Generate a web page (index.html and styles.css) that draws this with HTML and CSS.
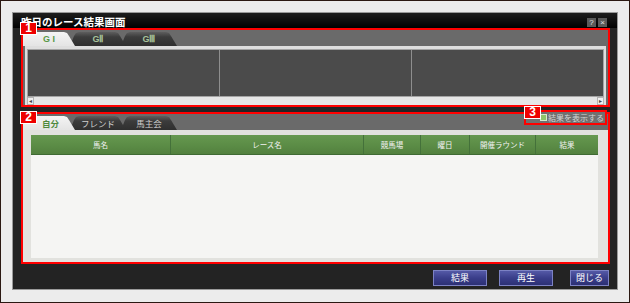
FILE: index.html
```html
<!DOCTYPE html>
<html>
  <head>
    <title>昨日のレース結果画面</title>
    <meta charset="utf-8" />
    <link rel="stylesheet" href="styles.css">
  </head>
  <body>
    <div class="window">
      <div class="titlebar">
        <span class="title">昨日のレース結果画面</span>
        <span class="tbtns"><span class="tbtn">?</span><span class="tbtn">×</span></span>
      </div>
      <div class="main">
        <!-- grade tabs -->
        <section class="box box-top">
          <span class="badge badge-1">1</span>
          <div class="tabs">
            <span class="tab tab-first active">G I</span>
            <span class="tab">GⅡ</span>
            <span class="tab">GⅢ</span>
          </div>
          <div class="panel">
            <div class="grid">
              <div class="col"></div>
              <div class="col"></div>
              <div class="col"></div>
            </div>
            <div class="hscroll">
              <span class="arrow">&#9666;</span>
              <span class="track"></span>
              <span class="arrow">&#9656;</span>
            </div>
          </div>
        </section>
        <!-- result list -->
        <section class="box box-bottom">
          <span class="badge badge-2">2</span>
          <div class="tabs">
            <span class="tab tab-first active ja">自分</span>
            <span class="tab ja">フレンド</span>
            <span class="tab ja">馬主会</span>
          </div>
          <label class="showres">
            <span class="badge badge-3">3</span>
            <span class="check"></span>結果を表示する
          </label>
          <div class="sheet">
            <div class="thead">
              <span>馬名</span>
              <span>レース名</span>
              <span>競馬場</span>
              <span>曜日</span>
              <span>開催ラウンド</span>
              <span>結果</span>
            </div>
            <div class="tbody"></div>
          </div>
        </section>
      </div>
      <div class="actions">
        <button class="btn btn-result">結果</button>
        <button class="btn btn-play">再生</button>
        <button class="btn btn-close">閉じる</button>
      </div>
    </div>
  </body>
</html>
```

FILE: styles.css
```css
* {
  box-sizing: border-box;
}
body {
  margin: 0;
  width: 630px;
  height: 303px;
  overflow: hidden;
  border: 1px solid #2b1812;
  background: #ececec;
  padding: 11px 0 0 11px;
  font-family: "Noto Sans CJK JP", "Liberation Sans", sans-serif;
}
.window {
  width: 606px;
  height: 278px;
  border: 1px solid #9a9a9a;
  background: #232323;
  display: flex;
  flex-direction: column;
}
/* title bar */
.titlebar {
  height: 15px;
  background: linear-gradient(#1e1e1e, #000);
  display: flex;
  align-items: center;
  justify-content: space-between;
  padding: 0 10px 0 8px;
}
.title {
  color: #fff;
  font-weight: bold;
  font-size: 10.5px;
  line-height: 15px;
  padding-top: 1px;
}
.tbtns {
  display: flex;
  gap: 2px;
  padding-top: 3px;
}
.tbtn {
  width: 9px;
  height: 9px;
  background: #5a5a5a;
  color: #e0e0e0;
  font-size: 8px;
  line-height: 9px;
  text-align: center;
  font-family: "Liberation Sans", sans-serif;
}
.main {
  padding: 0 7px 0 8px;
}
/* red outlined boxes */
.box {
  position: relative;
  border: 2px solid #f00;
}
.badge {
  position: absolute;
  width: 17px;
  height: 13px;
  background: #e00;
  border: 1px solid #fff;
  color: #fff;
  font-family: "Liberation Sans", sans-serif;
  font-weight: bold;
  font-size: 12px;
  line-height: 11px;
  text-align: center;
  z-index: 5;
}
.badge-1 {
  left: -3px;
  top: -8px;
}
.badge-2 {
  left: -3px;
  top: -3px;
}
.badge-3 {
  left: -2px;
  top: -6px;
}
.box-top {
  height: 79px;
  background: #6a6a6a;
}
/* tabs */
.tabs {
  display: flex;
  align-items: flex-end;
  height: 16px;
  background: #6a6a6a;
}
.tab {
  position: relative;
  height: 14px;
  width: 56px;
  margin-right: -5px;
  clip-path: polygon(0 100%, 4px 4px, 6px 1px, 9px 0, calc(100% - 11px) 0, calc(100% - 8px) 1px, calc(100% - 6px) 4px, 100% 100%);
  background: linear-gradient(#5e5e5e, #3c3c3c 35%, #2f2f2f);
  color: #a9c49c;
  font-family: "Liberation Sans", sans-serif;
  font-size: 9px;
  font-weight: bold;
  line-height: 15px;
  text-align: center;
}
.tab.ja {
  color: #cfcfcf;
  font-family: "Noto Sans CJK JP", sans-serif;
  font-weight: normal;
  font-size: 8.5px;
}
.tab-first {
  width: 52px;
  clip-path: polygon(0 0, calc(100% - 11px) 0, calc(100% - 8px) 1px, calc(100% - 6px) 4px, 100% 100%, 0 100%);
}
.tab.active {
  background: linear-gradient(#f4f4f4, #e4e4e4);
  color: #5a9848;
  z-index: 2;
}
.tab.ja.active {
  color: #4f8a3e;
  font-weight: bold;
  text-align: right;
  padding-right: 16px;
}
/* top panel */
.panel {
  margin: 0 2px;
  height: 59px;
  background: #dedede;
  padding: 3px 2px 0;
  display: flex;
  flex-direction: column;
}
.grid {
  height: 48px;
  background: #4b4b4b;
  border: 1px solid #a4a4a4;
  display: flex;
}
.col {
  flex: 1;
  border-right: 1px solid #8e8e8e;
}
.col:last-child {
  border-right: none;
}
.hscroll {
  height: 8px;
  display: flex;
  background: #e6e6e6;
}
.arrow {
  width: 7px;
  height: 8px;
  border: 1px solid #b4b4b4;
  background: #f0f0f0;
  color: #444;
  font-size: 6px;
  line-height: 6px;
  text-align: center;
  font-family: "DejaVu Sans", sans-serif;
}
.track {
  flex: 1;
}
/* bottom box */
.box-bottom {
  height: 152px;
  margin-top: 5px;
  background: #e2e2de;
  display: flex;
  flex-direction: column;
}
.box-bottom .tabs {
  height: 16px;
}
.showres {
  position: absolute;
  left: 501px;
  top: -4px;
  width: 83px;
  height: 15px;
  border: 2px solid #f00;
  background: #707070;
  color: #d4d4d4;
  font-size: 8px;
  line-height: 11px;
  display: flex;
  align-items: center;
  padding-left: 14px;
  z-index: 4;
}
.check {
  width: 7px;
  height: 7px;
  background: #8fc46a;
  border: 1px solid #d8e8cc;
  margin-right: 1px;
}
.sheet {
  flex: 1;
  padding: 5px 10px 4px 8px;
  display: flex;
  flex-direction: column;
}
.thead {
  display: grid;
  grid-template-columns: 139px 193px 57px 49px 66px 63px;
  height: 20px;
  background: linear-gradient(#66984f, #5a8b45 60%, #52803e);
  border-bottom: 1px solid #3f6a33;
}
.thead span {
  color: #f2f2f2;
  font-size: 7.5px;
  line-height: 19px;
  text-align: center;
  border-left: 1px solid #44713a;
}
.thead span:first-child {
  border-left: none;
}
.tbody {
  flex: 1;
  background: #f5f5f3;
}
/* buttons */
.actions {
  display: flex;
  justify-content: flex-end;
  padding: 6px 8px 0;
}
.btn {
  height: 16px;
  border: 1px solid #7c82c4;
  background: linear-gradient(#5459a6, #3a3e8a 50%, #2c3074);
  color: #fff;
  font-family: "Noto Sans CJK JP", sans-serif;
  font-size: 9px;
  line-height: 12px;
  padding: 0;
}
.btn-result {
  width: 54px;
}
.btn-play {
  width: 54px;
  margin-left: 12px;
}
.btn-close {
  width: 39px;
  margin-left: 17px;
}
```
